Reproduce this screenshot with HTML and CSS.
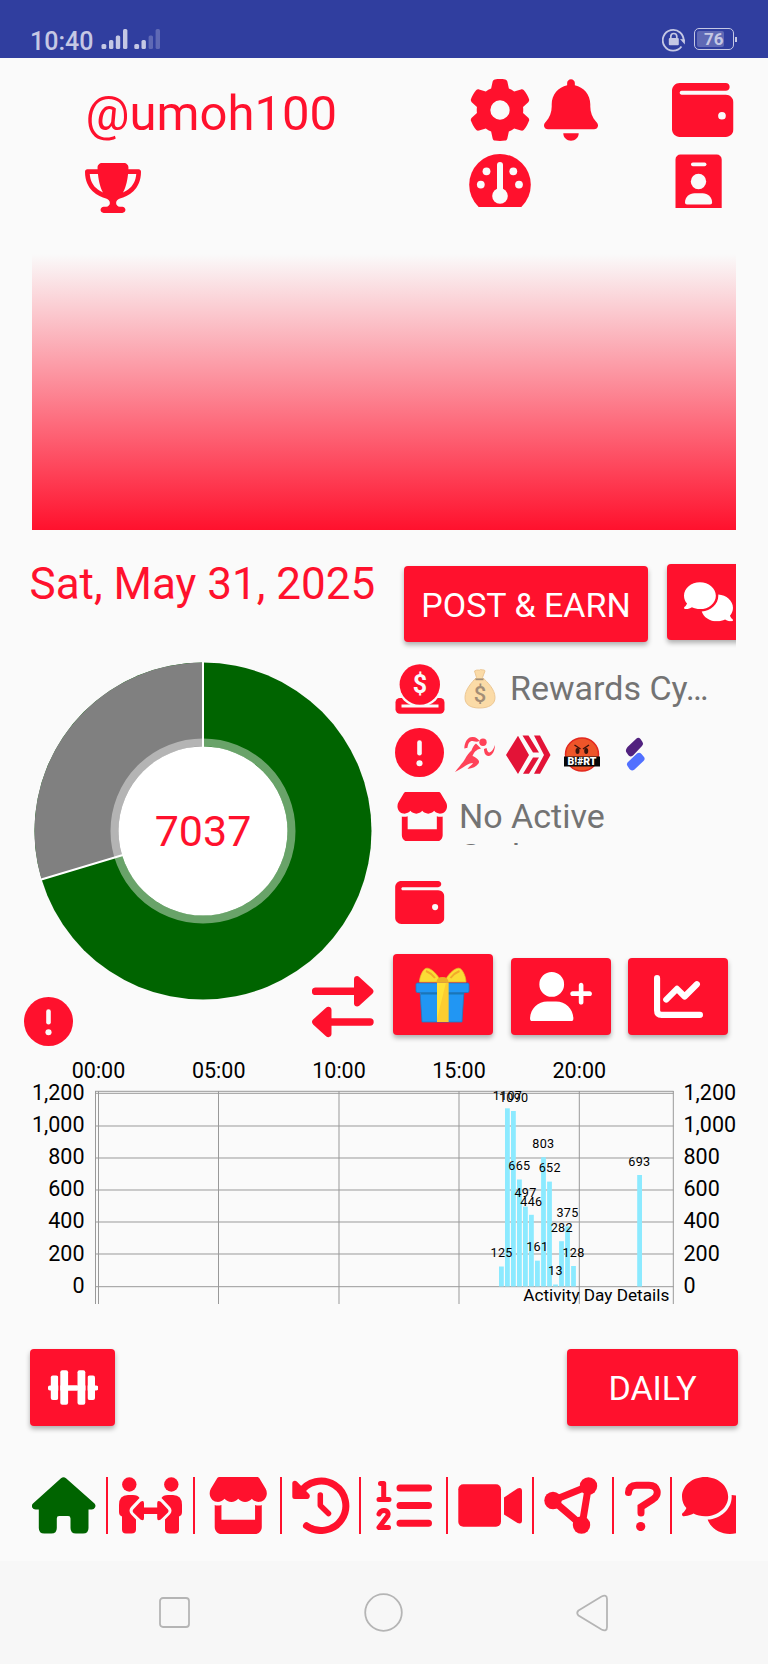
FILE: index.html
```html
<!DOCTYPE html>
<html lang="en">
<head>
<meta charset="utf-8">
<title>Activity</title>
<link rel="stylesheet" href="styles.css">
</head>
<body>
<svg class="defs" width="0" height="0">
  <symbol id="wallet" viewBox="0 32 512 448"><path fill-rule="evenodd" d="M64 32C28.7 32 0 60.7 0 96V416c0 35.3 28.7 64 64 64H448c35.3 0 64-28.7 64-64V192c0-35.3-28.7-64-64-64H80c-8.8 0-16-7.2-16-16s7.2-16 16-16H448c17.7 0 32-14.3 32-32s-14.3-32-32-32H64zM416 272a32 32 0 1 1 0 64 32 32 0 1 1 0-64z"/></symbol>
  <symbol id="store" viewBox="0 0 576 512"><path d="M547.6 103.8L490.3 13.1C485.2 5 476.1 0 466.4 0H109.6C99.9 0 90.8 5 85.7 13.1L28.3 103.8c-29.6 46.8-3.4 111.9 51.9 119.4c4 .5 8.1 .8 12.1 .8c26.1 0 49.3-11.4 65.2-29c15.9 17.6 39.1 29 65.2 29c26.1 0 49.3-11.4 65.2-29c15.9 17.6 39.1 29 65.2 29c26.2 0 49.3-11.4 65.2-29c16 17.6 39.1 29 65.2 29c4.1 0 8.1-.3 12.1-.8c55.5-7.4 81.8-72.5 52.1-119.4zM499.7 254.9l-.1 0c-5.3 .7-10.7 1.1-16.2 1.1c-12.4 0-24.3-1.9-35.4-5.3V384H128V250.6c-11.2 3.5-23.2 5.4-35.6 5.4c-5.5 0-11-.4-16.3-1.1l-.1 0c-4.1-.6-8.1-1.3-12-2.3V384v64c0 35.3 28.7 64 64 64H448c35.3 0 64-28.7 64-64V384 252.6c-4 1-8 1.8-12.3 2.3z"/></symbol>
  <symbol id="comments" viewBox="0 0 640 512"><path d="M208 352c114.9 0 208-78.8 208-176S322.9 0 208 0S0 78.8 0 176c0 38.6 14.7 74.3 39.6 103.4c-3.5 9.4-8.7 17.7-14.2 24.7c-4.8 6.2-9.7 11-13.3 14.3c-1.8 1.6-3.3 2.9-4.3 3.7c-.5 .4-.9 .7-1.1 .8l-.2 .2C1 327.2-1.4 334.4 .8 340.9S9.1 352 16 352c21.8 0 43.8-5.6 62.1-12.5c9.2-3.5 17.8-7.4 25.3-11.4C134.1 343.3 169.8 352 208 352zM448 176c0 112.3-99.1 196.9-216.5 207C255.8 457.4 336.4 512 432 512c38.2 0 73.9-8.7 104.7-23.9c7.5 4 16 7.9 25.2 11.4c18.3 6.9 40.3 12.5 62.1 12.5c6.9 0 13.1-4.5 15.2-11.1c2.1-6.6-.2-13.8-5.8-17.9l-.2-.2c-.2-.2-.6-.4-1.1-.8c-1-.8-2.5-2-4.3-3.7c-3.6-3.3-8.5-8.1-13.3-14.3c-5.5-7-10.7-15.4-14.2-24.7c24.9-29 39.6-64.7 39.6-103.4c0-92.8-84.9-168.9-192.6-175.5c.4 5.1 .6 10.3 .6 15.5z"/></symbol>
  <symbol id="alert" viewBox="0 0 512 512"><circle cx="256" cy="256" r="256"/><rect class="paper" x="232" y="128" width="48" height="160" rx="24"/><circle class="paper" cx="256" cy="368" r="32"/></symbol>
</svg>

<header class="status">
  <span class="clock">10:40</span>
  <svg class="signals" width="60" height="22" viewBox="101 28 60 22">
    <g fill="#c5c8e4"><rect x="101.5" y="44" width="4.8" height="5" rx="1.5"/><rect x="109" y="40" width="4.4" height="9" rx="1.5"/><rect x="115.8" y="35.5" width="4.4" height="13.5" rx="1.5"/><rect x="123" y="29" width="4.4" height="20" rx="1.5"/><rect x="134.3" y="44" width="4.8" height="5" rx="1.5"/><rect x="141.5" y="40" width="4.4" height="9" rx="1.5"/></g>
    <g fill="#5f69b5"><rect x="148.6" y="35.5" width="4.4" height="13.5" rx="1.5"/><rect x="155.6" y="29" width="4.4" height="20" rx="1.5"/></g>
  </svg>
  <svg class="lock" width="24" height="24" viewBox="661 28 24 24">
    <path d="M680.5 46.5a10.400 10.400 0 1 1 2-5" fill="none" stroke="#c5c8e4" stroke-width="1.800"/>
    <path d="M679 39l5 .5-.2 5z" fill="#c5c8e4"/>
    <rect x="667.800" y="38" width="10" height="7.200" rx="1" fill="#c5c8e4"/>
    <path d="M669.800 38.500v-2a3 3 0 0 1 6 0v2" fill="none" stroke="#c5c8e4" stroke-width="1.700"/>
  </svg>
  <div class="battery"><span class="battery-text">76</span></div><i class="battery-tip"></i>
</header>

<section class="profile">
  <h1 class="user">@umoh100</h1>
  <svg class="gear" width="62" height="62" viewBox="0 0 512 512"><path fill-rule="evenodd" d="M495.9 166.6c3.2 8.7 .5 18.4-6.4 24.6l-43.3 39.4c1.1 8.3 1.7 16.8 1.7 25.4s-.6 17.1-1.7 25.4l43.3 39.4c6.9 6.2 9.6 15.9 6.4 24.6c-4.4 11.9-9.7 23.3-15.8 34.3l-4.7 8.1c-6.6 11-14 21.4-22.1 31.2c-5.9 7.2-15.7 9.6-24.5 6.8l-55.7-17.7c-13.4 10.3-28.2 18.9-44 25.4l-12.5 57.1c-2 9.1-9 16.3-18.2 17.8c-13.8 2.3-28 3.5-42.5 3.5s-28.7-1.2-42.5-3.5c-9.2-1.5-16.2-8.7-18.2-17.8l-12.5-57.1c-15.8-6.5-30.6-15.1-44-25.4L83.1 425.9c-8.8 2.8-18.6 .3-24.5-6.8c-8.1-9.8-15.5-20.2-22.1-31.2l-4.7-8.1c-6.1-11-11.4-22.4-15.8-34.3c-3.2-8.7-.5-18.4 6.4-24.6l43.3-39.4C64.6 273.1 64 264.6 64 256s.6-17.1 1.7-25.4L22.4 191.2c-6.9-6.2-9.6-15.9-6.4-24.6c4.4-11.9 9.7-23.3 15.8-34.3l4.7-8.1c6.6-11 14-21.4 22.1-31.2c5.9-7.2 15.7-9.6 24.5-6.8l55.7 17.7c13.4-10.3 28.2-18.9 44-25.4l12.5-57.1c2-9.1 9-16.3 18.2-17.8C227.3 1.2 241.5 0 256 0s28.7 1.2 42.5 3.5c9.2 1.5 16.2 8.7 18.2 17.8l12.5 57.1c15.8 6.5 30.6 15.1 44 25.4l55.7-17.7c8.8-2.8 18.6-.3 24.5 6.8c8.1 9.8 15.5 20.2 22.1 31.2l4.7 8.1c6.1 11 11.4 22.4 15.8 34.3zM256 336a80 80 0 1 0 0-160 80 80 0 1 0 0 160z"/></svg>
  <svg class="bell" width="54" height="62" viewBox="0 0 448 512"><path d="M224 0c-17.7 0-32 14.3-32 32V51.2C119 66 64 130.6 64 208v18.8c0 47-17.3 92.4-48.5 127.6l-7.4 8.3c-8.4 9.4-10.4 22.9-5.3 34.4S19.4 416 32 416H416c12.6 0 24-7.4 29.2-18.9s3.1-25-5.3-34.4l-7.4-8.3C401.3 319.2 384 273.9 384 226.8V208c0-77.4-55-142-128-156.8V32c0-17.7-14.3-32-32-32zm45.3 493.3c12-12 18.7-28.3 18.7-45.3H224 160c0 17 6.7 33.3 18.7 45.3s28.3 18.7 45.3 18.7s33.3-6.7 45.3-18.7z"/></svg>
  <svg class="wallet" width="61.500" height="54"><use href="#wallet"/></svg>
  <svg class="trophy" width="56" height="50" viewBox="0 0 576 512"><path fill-rule="evenodd" d="M400 0H176c-26.5 0-48.1 21.8-47.1 48.2c.2 5.3 .4 10.6 .7 15.8H24C10.7 64 0 74.7 0 88c0 92.6 33.5 157 78.5 200.7c44.3 43.1 98.3 64.8 138.1 75.8c23.4 6.5 39.4 26 39.4 45.6c0 20.9-17 37.9-37.9 37.9H192c-17.7 0-32 14.3-32 32s14.3 32 32 32H384c17.700 0 32-14.300 32-32s-14.300-32-32-32H357.900C337 448 320 431 320 410.100c0-19.600 15.900-39.200 39.400-45.600c39.900-11 93.900-32.700 138.200-75.800C542.500 245 576 180.600 576 88c0-13.300-10.700-24-24-24H446.400c.3-5.200 .5-10.400 .7-15.800C448.100 21.800 426.500 0 400 0zM48.900 112h84.400c9.100 90.100 29.200 150.300 51.900 190.600c-24.900-11-50.800-26.500-73.200-48.300c-32-31.100-58-76-63-142.300zM464.100 254.300c-22.400 21.800-48.300 37.300-73.200 48.300c22.700-40.300 42.800-100.500 51.900-190.600h84.400c-5.100 66.300-31.100 111.200-63 142.300z"/></svg>
  <svg class="gauge" width="62" height="53" viewBox="469 154 62 53"><circle cx="500" cy="184.800" r="30.800"/><g class="paper"><circle cx="486.500" cy="171.300" r="3.900"/><circle cx="480.800" cy="184.600" r="3.900"/><circle cx="513.300" cy="171.300" r="3.900"/><circle cx="519" cy="184.600" r="3.900"/><rect x="497" y="162" width="6" height="32" rx="3"/><circle cx="500" cy="196" r="7.800"/></g></svg>
  <svg class="badge" width="47" height="54" viewBox="675 154 47 54"><path d="M675.500 208v-48.500a5 5 0 0 1 5-5h36.200a5 5 0 0 1 5 5V208z"/><g class="paper"><rect x="691" y="162.500" width="15.400" height="3.700" rx="1.850"/><circle cx="698.500" cy="181.500" r="7.700"/><path d="M685 202.500c0-5.500 4.400-9.300 9.500-9.300h8.100c5.100 0 9.500 3.800 9.500 9.300 0 1.200-.8 2-2 2h-23.100c-1.200 0-2-.8-2-2z"/></g></svg>
</section>

<div class="banner"></div>

<main class="overview">
  <div class="left">
    <h2 class="date">Sat, May 31, 2025</h2>
    <svg class="donut" width="338" height="338" viewBox="-169 -169 338 338">
      <circle r="168.500" fill="#006400"/>
      <path d="M0 0L-161.400 48.400A168.500 168.500 0 0 1 0-168.500z" fill="#808080"/>
      <path d="M0-169V0L-162.500 48.700" fill="none" stroke="#fff" stroke-width="2"/>
      <circle r="88.500" fill="none" stroke="#fff" stroke-opacity=".41" stroke-width="8"/>
      <circle r="84.500" fill="#fff"/>
      <text class="steps" y="14.800">7037</text>
    </svg>
    <div class="chart-tools">
      <svg width="49" height="49"><use href="#alert"/></svg>
      <svg class="swap" width="62" height="62" viewBox="312 976 62 62"><path d="M315.600 991.300h40M370 1022h-40" fill="none" stroke="#ff112d" stroke-width="7.400" stroke-linecap="round"/><path d="M354 979.200c0-2.600 3-4.100 5.200-2.300l13.200 12c1.500 1.400 1.500 3.500 0 4.900l-13.200 12c-2.200 1.800-5.200.3-5.200-2.300zM331.500 1009.800c0-2.600-3-4.100-5.200-2.300l-13.200 12c-1.500 1.400-1.500 3.500 0 4.900l13.200 12c2.200 1.800 5.200.3 5.200-2.300z"/></svg>
    </div>
  </div>

  <div class="right">
    <div class="actions">
      <button class="btn post">POST &amp; EARN</button>
      <button class="btn chat"><svg width="49" height="39.500"><use href="#comments"/></svg></button>
    </div>
    <div class="row rewards">
      <svg width="50" height="50" viewBox="394.500 664 50 50"><rect x="395" y="698" width="49" height="15.700" rx="4.500"/><circle cx="419.300" cy="684.500" r="22.500" class="paper"/><rect class="paper" x="401" y="704.500" width="37" height="3"/><circle cx="419.300" cy="684.500" r="20.200"/><text class="coin" x="419.300" y="693.200">$</text></svg>
      <svg class="bag" width="32" height="40" viewBox="464 669 32 40"><path d="M474.500 671c3-2 5 0 6-1.500 2 1 4-.5 4.500 1.500l-2.500 6.500c5 4.500 12.500 12 12.500 20 0 7-6 10.500-15.500 10.500S465 704.500 465 697.500c0-8 7-15.500 11.500-20z" fill="#fbdba7" stroke="#ecc794" stroke-width="1"/><path d="M475.500 679.300h8" stroke="#a38d76" stroke-width="1.800"/><text class="bag-sign" x="480" y="701.500">$</text></svg>
      <span class="muted">Rewards Cy…</span>
    </div>
    <div class="row tokens">
      <svg width="49" height="49"><use href="#alert"/></svg>
      <svg class="runner" width="42" height="36" viewBox="454 736 42 36"><g fill="#ff4258"><circle cx="483" cy="742.300" r="3.700"/><path d="M464.300 748.500c.2-7 3.700-12 8.700-11.500 3 0 5 2 6.500 3.800-1.500 1.200-4 1-6 .4-3.500-.8-5.500 2-6 6.500zM476 743.500l5 5c-5 1-7 4-8.500 7.500 4.500 2 8 4.500 6 7.500-2 3-6 5-11 5.500 2-3 5-4.500 5.500-6-5 0-10 5-18 9 4.500-6 8-9.500 10-13 2-4 4.500-6.500 6.500-8.500 1-3 2-5 4.500-7zM486.500 748c1 3.500 1.500 4.500 3 4.500 2.500-1 4-3.500 5.500-7.500 0 5-2.500 11-6.500 11-3.500 0-4.500-4-4.500-7z"/></g></svg>
      <svg class="hive" width="45" height="39" viewBox="506 735 45 39"><path fill="#e31337" d="M518 735.800l11 19.200-11 19-12-19zM522.500 735.500h6l10.500 17h-6zM534 735.500h6l10.500 19.500-10.500 18.800h-6L544 755zM533 757.500h6l-10 16.300h-6z"/></svg>
      <svg class="brt" width="38" height="35" viewBox="562.500 737.500 38 35"><circle cx="581.500" cy="755" r="16.500" fill="#ee5529" stroke="#e3271e" stroke-width="1.500"/><ellipse cx="577" cy="751.500" rx="2" ry="3" fill="#38130b"/><ellipse cx="585.700" cy="751.500" rx="2" ry="3" fill="#38130b"/><path d="M574 745.500l6 4M588.500 745.500l-6 4" stroke="#38130b" stroke-width="1.500"/><rect x="563.500" y="757" width="36" height="10" fill="#080808"/><text class="brt-text" x="581.500" y="765">B!#RT</text></svg>
      <svg class="split" width="22" height="36" viewBox="624 737 22 36"><path d="M627.500 747l9-8.500q2-1.500 4 .5l2 3q1.500 2-.5 4l-9 9.500q-3 2-4.800-.5l-2-3q-1-2 1.300-5z" fill="#51227f"/><path d="M628 762l9-8.500q2.500-1.500 4.500.5l2.500 3q1.500 2-.5 4l-9 8.500q-3 2-5-.5l-2-3q-1.500-2 .5-4z" fill="#5170ff"/></svg>
    </div>
    <div class="row gadgets">
      <svg width="52.500" height="49.500" viewBox="0 0 576 512" preserveAspectRatio="none"><use href="#store"/></svg>
      <p class="muted gadgets-text">No Active Gadgets</p>
    </div>
    <svg class="wallet-small" width="49.500" height="43"><use href="#wallet"/></svg>
    <div class="tiles">
      <button class="btn tile gift"><svg width="56" height="56" viewBox="415 970 56 56">
        <path d="M420 994h44l-2 31h-40z" fill="#2196f3" stroke="#1f78c2" stroke-width=".8"/><path d="M421 995h43v2.500h-43z" fill="#1976b8"/>
        <rect x="416" y="986" width="53" height="9.500" rx="1.500" fill="#2196f3" stroke="#1f78c2" stroke-width=".8"/>
        <path d="M437 985.500h11.500V1025H437z" fill="#ffe236"/><path d="M446 985.500h2.500V1025H437v-3z" fill="#f9bc2b" opacity=".55"/>
        <path d="M419.500 985c0-5 3-12 6-13.500 4-2 11 5 13.500 9.500v4zM466 985c0-5-3-12-6-13.500-4-2-11 5-13.500 9.500v4z" fill="#fbdc35" stroke="#e9b52c" stroke-width=".7"/>
        <path d="M426 974q5 2 9 7M459.500 974q-5 2-9 7" fill="none" stroke="#f3a92b" stroke-width="2"/><path d="M436.500 985.500q0-5.500 6-5.500t6 5.500z" fill="#edaf28"/></svg></button>
      <button class="btn tile"><svg width="62" height="49.500" viewBox="0 0 640 512"><path d="M96 128a128 128 0 1 1 256 0A128 128 0 1 1 96 128zM0 482.300C0 383.800 79.800 304 178.300 304h91.400C368.200 304 448 383.800 448 482.300c0 16.400-13.300 29.700-29.700 29.700H29.700C13.300 512 0 498.700 0 482.300zM504 312V248H440c-13.300 0-24-10.700-24-24s10.700-24 24-24h64V136c0-13.300 10.700-24 24-24s24 10.700 24 24v64h64c13.300 0 24 10.700 24 24s-10.700 24-24 24H552v64c0 13.300-10.700 24-24 24s-24-10.700-24-24z"/></svg></button>
      <button class="btn tile"><svg width="49" height="43" viewBox="0 32 512 448"><path class="trend" d="M32 64v336q0 48 48 48h400M128 288l112-112 80 80 128-128"/></svg></button>
    </div>
  </div>
</main>

<svg class="activity" width="768" height="270" viewBox="0 1050 768 270">
  <g class="grid-lines">
    <path d="M95 1091.300H673.500M95 1093.300H673.500M95 1126H673.500M95 1158H673.500M95 1190H673.500M95 1222H673.500M95 1254H673.500M95 1286.700H673.500"/>
    <path d="M95.500 1091V1304M98.500 1091V1304M218.500 1091V1304M339 1091V1304M459 1091V1304M579.300 1091V1304M673.300 1091V1304"/>
  </g>
  <g class="axis middle"><text x="98.500" y="1077.500">00:00</text><text x="218.700" y="1077.500">05:00</text><text x="339" y="1077.500">10:00</text><text x="459" y="1077.500">15:00</text><text x="579.300" y="1077.500">20:00</text></g>
  <g class="axis end"><text x="84.500" y="1100">1,200</text><text x="84.500" y="1132">1,000</text><text x="84.500" y="1164">800</text><text x="84.500" y="1196">600</text><text x="84.500" y="1228">400</text><text x="84.500" y="1260.500">200</text><text x="84.500" y="1292.500">0</text></g>
  <g class="axis"><text x="683.500" y="1100">1,200</text><text x="683.500" y="1132">1,000</text><text x="683.500" y="1164">800</text><text x="683.500" y="1196">600</text><text x="683.500" y="1228">400</text><text x="683.500" y="1260.500">200</text><text x="683.500" y="1292.500">0</text></g>
  <g fill="#8ceaff">
    <rect x="499" y="1266.500" width="4.800" height="20"/><rect x="505" y="1108.300" width="4.800" height="178.200"/><rect x="511" y="1111" width="4.800" height="175.500"/><rect x="517" y="1179.500" width="4.800" height="107"/><rect x="523" y="1206.600" width="4.800" height="79.900"/><rect x="529" y="1214.800" width="4.800" height="71.700"/><rect x="535" y="1260.700" width="4.800" height="25.800"/><rect x="541.100" y="1157.300" width="4.800" height="129.200"/><rect x="547.100" y="1181.600" width="4.800" height="104.900"/><rect x="553.100" y="1284.500" width="4.800" height="2"/><rect x="559.100" y="1241.200" width="4.800" height="45.300"/><rect x="565.100" y="1226.300" width="4.800" height="60.200"/><rect x="571.100" y="1266" width="4.800" height="20.500"/><rect x="637.200" y="1175" width="4.800" height="111.500"/>
  </g>
  <g class="value middle"><text x="501.600" y="1257">125</text><text x="507.500" y="1099.500">1107</text><text x="513.700" y="1101.500">1090</text><text x="519.400" y="1170">665</text><text x="525.500" y="1197">497</text><text x="531.400" y="1205.500">446</text><text x="537.300" y="1251">161</text><text x="543.400" y="1148">803</text><text x="549.800" y="1172">652</text><text x="555.500" y="1275">13</text><text x="561.800" y="1232">282</text><text x="567.500" y="1217">375</text><text x="573.500" y="1257">128</text><text x="639.400" y="1166">693</text></g>
  <text class="caption" x="669.300" y="1301">Activity Day Details</text>
</svg>

<div class="period">
  <button class="btn gym"><svg width="50" height="35" viewBox="48 1370 50 35"><path d="M55 1388h37M50.300 1388h1M95 1388h1" stroke="#fff" stroke-width="5" stroke-linecap="round"/><path d="M77 1388h-9" stroke="#fff" stroke-width="5"/><rect x="50.800" y="1375.500" width="7.500" height="24.500" rx="2"/><rect x="87.500" y="1375.500" width="7.500" height="24.500" rx="2"/><path class="gap" d="M59.300 1375v26M86.500 1375v26"/><rect x="60.300" y="1370.300" width="7.800" height="34.500" rx="2"/><rect x="77.500" y="1370.300" width="7.800" height="34.500" rx="2"/></svg></button>
  <button class="btn daily">DAILY</button>
</div>

<nav class="tabs">
  <svg class="home" width="64" height="57" viewBox="32 1477 64 57"><path d="M61 1478.200q2.500-2 5 0l28.500 25.300q1.700 2 .5 4-1 2-3.200 2h-3.300V1528q0 5.500-5.500 5.500h-7q-5.500 0-5.500-5.500v-9.500q0-2.400-2.400-2.400h-8.900q-2.400 0-2.400 2.400v9.500q0 5.500-5.500 5.500h-7q-5.500 0-5.500-5.500v-18.500h-3.200q-2.400 0-3.400-2-1-2 .8-4z"/></svg>
  <i class="rule r1"></i>
  <svg class="people" width="64" height="57" viewBox="119 1477 64 57"><g><circle cx="129.300" cy="1484.500" r="7.200"/><path d="M119 1505q0-10 9-10h5q5 0 6.500 3l-8.500 9q-3 3.800 0 7.200l5 5.300v10q0 4-4.500 4h-5.500q-4 0-4-4v-13q-3-1-3-4.500z"/></g><g transform="matrix(-1 0 0 1 301 0)"><circle cx="129.700" cy="1484.500" r="7.200"/><path d="M119 1505q0-10 9-10h5q5 0 6.500 3l-8.500 9q-3 3.800 0 7.200l5 5.300v10q0 4-4.500 4h-5.500q-4 0-4-4v-13q-3-1-3-4.500z"/></g><path d="M133.200 1509.500l7.300-7.800q3.500-2 3.500 1.500v4.300h13.200v-4.300q0-3.500 3.500-1.500l7.300 7.800q1.200 1.500 0 3l-7.300 7q-3.500 2-3.500-1.500v-3.900H144v3.900q0 3.500-3.500 1.500l-7.300-7q-1.200-1.500 0-3z"/></svg>
  <i class="rule r2"></i>
  <svg class="shop" width="60.500" height="57" viewBox="0 0 576 512" preserveAspectRatio="none"><use href="#store"/></svg>
  <i class="rule r3"></i>
  <svg class="history" width="58" height="57" viewBox="292 1477 58 57"><path d="M300 1493a24.700 24.700 0 1 1 6.500 32.700" fill="none" stroke="#ff112d" stroke-width="7" stroke-linecap="round"/><path d="M320.300 1495v10.500l8.200 8" fill="none" stroke="#ff112d" stroke-width="5.500" stroke-linecap="round" stroke-linejoin="round"/><path d="M292.300 1483q0-1.500 1.500-2 1.800-.5 3 .5l12.500 12.800q1 1.300.3 3-.5 1.700-2.300 1.700h-12.500q-2.500 0-2.500-2.500z"/></svg>
  <i class="rule r4"></i>
  <svg class="list" width="57" height="52" viewBox="376 1480 57 52" fill="none" stroke="#ff112d" stroke-linecap="round" stroke-linejoin="round"><path d="M400 1488h28.500M400 1505.600h28.500M400 1523.200h28.500" stroke-width="7"/><path class="marks" d="M380.500 1483.500h3.200v15.800M379 1499.500h10M379 1514q1.500-3.500 5-3.500c4 0 5.500 4 2.500 7l-7.500 10h9.500"/></svg>
  <i class="rule r5"></i>
  <svg class="video" width="64" height="43" viewBox="458 1484 64 43"><rect x="458.300" y="1484.300" width="42.700" height="42.500" rx="5"/><path d="M504 1497.500l13.500-9q4.500-1.500 4.500 2.500v29.500q0 4-4.500 2.500l-13.500-8.500z"/></svg>
  <i class="rule r6"></i>
  <svg class="nodes" width="54" height="57" viewBox="545 1477 54 57"><path d="M554 1500.500l35.500-14.500-6.500 39.500z" fill="none" stroke="#ff112d" stroke-width="7"/><circle cx="554" cy="1500.500" r="8.700"/><circle cx="589.500" cy="1486" r="8.700"/><circle cx="582.500" cy="1525" r="8.700"/></svg>
  <i class="rule r7"></i>
  <svg class="help" width="36" height="50" viewBox="625 1480.500 36 50"><path d="M628.500 1492q.5-7.300 8-7.300h12.500c9 0 11 10 4 14l-12 7.800v6" fill="none" stroke="#ff112d" stroke-width="7" stroke-linecap="round"/><circle cx="640.700" cy="1526" r="4.600"/></svg>
  <i class="rule r8"></i>
  <div class="talk"><svg width="71" height="57"><use href="#comments"/></svg></div>
</nav>

<footer class="system">
  <svg width="31" height="31" viewBox="0 0 31 31"><rect x="1" y="1" width="29" height="29" rx="3"/></svg>
  <svg width="39" height="39" viewBox="0 0 39 39"><circle cx="19.500" cy="19.500" r="18.300"/></svg>
  <svg width="33" height="38" viewBox="0 0 33 38"><path d="M2.500 16.500L25.500 2.500Q31 0 31 5v28q0 5-5.500 2.500L2.500 21.500Q0 19 2.500 16.500z"/></svg>
</footer>
</body>
</html>
```
FILE: styles.css
```css
* { box-sizing: border-box; }
body {
  margin: 0;
  width: 768px;
  height: 1664px;
  overflow: hidden;
  display: flex;
  flex-direction: column;
  background: #fafafa;
  font-family: Roboto, "Liberation Sans", sans-serif;
  color: #ff112d;
}
svg { display: block; flex: none; fill: #ff112d; }
.defs { position: absolute; }
.paper { fill: #fafafa; }
h1, h2, p { margin: 0; font-weight: 400; }

.status {
  height: 57.5px;
  flex: none;
  display: flex;
  align-items: flex-start;
  padding: 28px 31px 0 30px;
  background: #303e9f;
}
.clock { width: 71px; font-size: 25px; line-height: 27px; font-weight: 500; color: #c5c8e4; }
.lock { margin-left: auto; }
.battery {
  width: 40px; height: 22px; margin-left: 8px;
  border: 1.5px solid #c5c8e4; border-radius: 5px;
  padding: 2px;
}
.battery-text {
  display: block; width: 27px; height: 16px; padding-left: 7px;
  background: #5f69b5; border-radius: 2px;
  font-size: 17px; line-height: 17px; font-weight: 700; color: #c5c8e4;
}
.battery-tip { width: 2px; height: 5px; margin: 9px 0 0 1px; background: #c5c8e4; }

.profile {
  height: 196.5px;
  flex: none;
  display: grid;
  grid-template-columns: 384px 75px 128px 1fr;
  grid-template-rows: 75px 1fr;
  padding: 21.5px 32px 0 85px;
  align-items: start;
}
.user { font-size: 49px; line-height: 60px; margin: 5px 0 0 0.5px; white-space: nowrap; }
.wallet { margin-top: 4px; }
.trophy { margin-top: 9px; }
.badge { grid-column: 4; margin-left: 3px; }

.banner { height: 275.5px; flex: none; margin: 0 32px; background: linear-gradient(#fafafa, #ff112d); }

.overview { height: 520.5px; flex: none; display: grid; grid-template-columns: 393px 343px; }
.date { margin: 29px 0 0 29.5px; font-size: 44px; line-height: 50px; white-space: nowrap; }
.donut { margin: 53px 0 0 34px; }
.steps { font-size: 43px; text-anchor: middle; }
.chart-tools { display: flex; justify-content: space-between; align-items: flex-end; margin: -24px 19px 0 23.5px; height: 70px; }
.swap { align-self: flex-start; }

.btn {
  flex: none;
  display: flex; align-items: center; justify-content: center;
  border: 0; border-radius: 4px; padding: 0;
  background: #ff112d; color: #fff;
  font: 400 34px Roboto, "Liberation Sans", sans-serif;
  box-shadow: 0 3px 5px rgba(0, 0, 0, .3);
}
.btn svg { fill: #fff; }
.actions { display: flex; align-items: flex-start; width: 343px; height: 134px; padding: 34px 0 0 11px; overflow: hidden; }
.post { width: 244px; height: 76.5px; margin-top: 2px; padding-top: 3px; }
.chat { width: 90px; height: 76.5px; margin-left: 18.5px; justify-content: flex-start; padding: 0 0 0 17.5px; }

.row { display: flex; align-items: flex-start; padding-left: 2px; }
.muted { font-size: 34px; line-height: 40px; color: #737373; white-space: nowrap; }
.rewards { height: 64.5px; }
.rewards .muted { margin: 4px 0 0 14px; }
.bag { margin: 5px 0 0 19px; }
.coin { fill: #fafafa; font-size: 25px; font-weight: 700; text-anchor: middle; }
.bag-sign { fill: #a38d76; font-size: 22px; font-weight: 500; text-anchor: middle; }
.tokens { height: 63.5px; }
.runner { margin: 8px 0 0 10px; }
.hive { margin: 6.5px 0 0 10px; }
.brt { margin: 9px 0 0 11.5px; }
.brt-text { fill: #fff; font-size: 10.5px; font-weight: 900; text-anchor: middle; }
.split { margin: 8.5px 0 0 23.5px; }
.gadgets { height: 89.5px; padding-left: 3px; }
.gadgets-text { width: 200px; height: 49.5px; margin: 4px 0 0 10.5px; overflow: hidden; white-space: normal; }
.wallet-small { margin-left: 2px; }
.tiles { display: flex; align-items: flex-end; gap: 17.5px; margin-top: 30px; height: 81px; }
.tile { width: 100px; height: 77px; }
.gift { height: 81px; }
.trend { fill: none; stroke: #fff; stroke-width: 64; stroke-linecap: round; stroke-linejoin: round; }

.activity { height: 270px; }
.grid-lines { fill: none; stroke: #999; stroke-width: 1; }
.axis { fill: #000; font-size: 21.5px; }
.middle { text-anchor: middle; }
.end { text-anchor: end; }
.value { fill: #000; font-size: 12.6px; letter-spacing: .3px; }
.caption { fill: #000; font-size: 17.2px; text-anchor: end; }

.period { height: 157px; flex: none; display: flex; justify-content: space-between; padding: 29px 30px 0; }
.gym { width: 85px; height: 77px; }
.daily { width: 171px; height: 77px; }
.gap { fill: none; stroke: #ff112d; stroke-width: 2; }

.tabs { height: 84px; flex: none; display: flex; align-items: flex-start; padding: 0 32px; overflow: hidden; }
.home { fill: #006400; }
.rule { flex: none; width: 2px; height: 57px; background: #ff112d; }
.r1 { margin: 0 11px 0 10px; }
.r2 { margin: 0 13px 0 9.5px; }
.r3 { margin: 0 10.5px 0 11.5px; }
.r4 { margin: 0 15px 0 9px; }
.list { margin-top: 3px; fill: none; }
.marks { stroke-width: 5; }
.r5 { margin: 0 10.5px 0 12.5px; }
.video { margin-top: 7px; }
.r6 { margin: 0 10px 0 10px; }
.r7 { margin: 0 11px 0 13.5px; }
.help { margin-top: 3.5px; }
.r8 { margin: 0 10px 0 9.5px; }
.talk { width: 53.5px; overflow: hidden; }

.system { flex: 1; display: flex; align-items: center; justify-content: space-between; padding: 0 159px; background: #f7f7f7; }
.system svg { fill: none; stroke: #b5b5b5; stroke-width: 1.8; }
```
